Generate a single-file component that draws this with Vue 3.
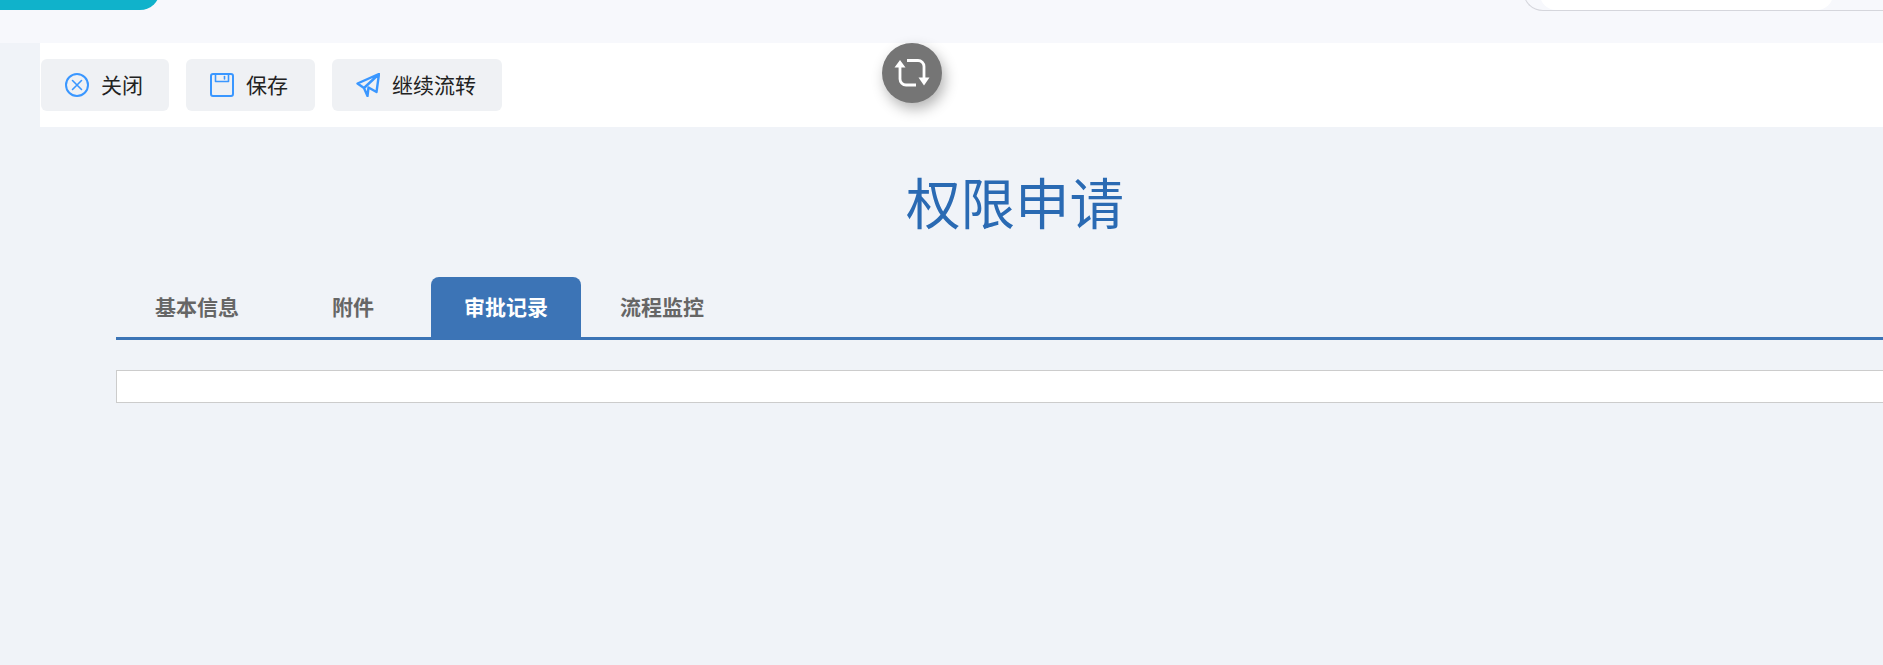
<template>
  <div class="page">
    <header class="topbar">
      <div class="topbar__brand"></div>
      <div class="topbar__search">
        <div class="topbar__input"></div>
      </div>
    </header>

    <div class="toolbar">
      <button v-for="btn in buttons" :key="btn.label" type="button" class="toolbar__btn">
        <svg class="toolbar__icon" viewBox="0 0 24 24" fill="none" stroke="#3a97ff" stroke-width="2" stroke-linejoin="round" stroke-linecap="round">
          <template v-if="btn.icon === 'close'">
            <circle cx="12" cy="12" r="11" />
            <path d="M7.500 7.500l9 9M16.500 7.500l-9 9" stroke-width="1.600" />
          </template>
          <template v-else-if="btn.icon === 'save'">
            <rect x="1" y="1" width="22" height="22" rx="2" />
            <path d="M5.500 1v7.500h13V1" stroke-width="1.600" />
            <path d="M14.500 3.500v2.500" stroke-width="1.600" />
          </template>
          <template v-else>
            <path d="M23 1L1.500 10.500l6.500 4.500L23 1zM23 1l-2.500 18-8-4.500L11.500 23l-3.500-8" stroke-width="2.400" />
          </template>
        </svg>
        <span class="toolbar__label">{{ btn.label }}</span>
      </button>
    </div>

    <button type="button" class="refresh" aria-label="刷新">
      <svg width="36" height="28" viewBox="0 0 36 28" fill="none" stroke="#fff" stroke-width="2.800">
        <path d="M6 8v12a6 6 0 0 0 6 6h10M13 1.500h11a6 6 0 0 1 6 6V19" />
        <path d="M6 1L0.500 8.500h11zM30 26.500l-5.500-8h11z" fill="#fff" stroke="none" />
      </svg>
    </button>

    <main class="content">
      <h1 class="content__title">权限申请</h1>
      <nav class="tabs">
        <a
          v-for="tab in tabs"
          :key="tab"
          class="tabs__item"
          :class="{ 'tabs__item--active': tab === activeTab }"
        >{{ tab }}</a>
      </nav>
      <div class="content__box"></div>
    </main>
  </div>
</template>

<script setup>
 const buttons = [
   { label: '关闭', icon: 'close' },
   { label: '保存', icon: 'save' },
   { label: '继续流转', icon: 'send' }
 ]

 const tabs = ['基本信息', '附件', '审批记录', '流程监控']
 const activeTab = '审批记录'
</script>

<style>
html,
body {
  margin: 0;
  overflow: hidden;
  background: #f0f3f8;
}
</style>

<style scoped>
.page {
  position: relative;
  width: 1883px;
  height: 665px;
  overflow: hidden;
  background: #f0f3f8;
  font-family: "Noto Sans CJK SC", "Liberation Sans", sans-serif;
}

.topbar {
  display: flex;
  justify-content: space-between;
  align-items: flex-start;
  height: 43px;
  overflow: hidden;
  background: #f7f8fc;
}

.topbar__brand {
  width: 160px;
  height: 30px;
  margin-top: -20px;
  background: #10b2cb;
  border-bottom-right-radius: 20px;
}

.topbar__search {
  width: 360px;
  height: 31px;
  margin-top: -20px;
  padding-left: 16px;
  box-sizing: border-box;
  border-bottom: 1px solid #d5d6dc;
  border-left: 1px solid #d5d6dc;
  border-bottom-left-radius: 20px;
}

.topbar__input {
  width: 293px;
  height: 30px;
  background: #fff;
  border-radius: 0 0 16px 16px;
}

.toolbar {
  display: flex;
  gap: 17px;
  margin-left: 40px;
  padding: 16px 1px;
  background: #fff;
}

.toolbar__btn {
  display: flex;
  align-items: center;
  gap: 12px;
  height: 52px;
  padding: 0 26px 0 24px;
  border: none;
  border-radius: 6px;
  background: #eff1f4;
  color: #222;
  font: inherit;
  font-size: 21px;
}

.toolbar__btn:nth-child(2) {
  padding-right: 27px;
}

.toolbar__icon {
  width: 24px;
  height: 24px;
  flex: none;
}

.toolbar__label {
  padding-bottom: 2px;
}

.refresh {
  position: absolute;
  left: 882px;
  top: 43px;
  display: flex;
  align-items: center;
  justify-content: center;
  width: 60px;
  height: 60px;
  padding: 0;
  border: none;
  border-radius: 50%;
  background: #757575;
  box-shadow: 3px 6px 14px rgba(0, 0, 0, 0.3);
}

.content {
  width: 1798px;
  margin-left: 116px;
}

.content__title {
  margin: 0;
  padding-top: 34px;
  height: 150px;
  box-sizing: border-box;
  color: #2a6ab3;
  font-size: 54.5px;
  font-weight: 400;
  line-height: 80px;
  text-align: center;
}

.tabs {
  display: flex;
  gap: 6px;
  height: 60px;
  padding-left: 6px;
  border-bottom: 3px solid #3c74b6;
}

.tabs__item {
  width: 150px;
  height: 60px;
  box-sizing: border-box;
  border-radius: 8px 8px 0 0;
  color: #666;
  font-size: 21px;
  font-weight: 700;
  line-height: 58px;
  text-align: center;
}

.tabs__item:nth-child(2) {
  width: 147px;
  padding-left: 3px;
}

.tabs__item--active {
  height: 63px;
  background: #3c74b6;
  color: #fff;
}

.content__box {
  height: 33px;
  margin-top: 30px;
  box-sizing: border-box;
  border: 1px solid #ccc;
  background: #fff;
}
</style>
